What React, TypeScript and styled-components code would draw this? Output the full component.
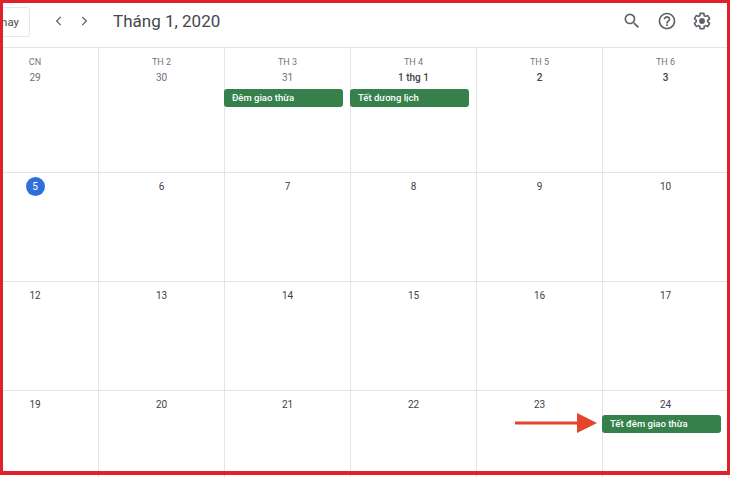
import React from 'react'
import styled, { createGlobalStyle } from 'styled-components'

const GlobalStyle = createGlobalStyle`
    html, body {
        margin: 0;
        padding: 0;
        background: #fff;
    }
    * {
        box-sizing: border-box;
    }
`

type Day = {
    label: string
    weekday?: string
    muted?: boolean
    strong?: boolean
    today?: boolean
    event?: string
}

const weeks: Day[][] = [
    [
        { weekday: 'CN', label: '29', muted: true },
        { weekday: 'TH 2', label: '30', muted: true },
        { weekday: 'TH 3', label: '31', muted: true, event: 'Đêm giao thừa' },
        { weekday: 'TH 4', label: '1 thg 1', strong: true, event: 'Tết dương lịch' },
        { weekday: 'TH 5', label: '2', strong: true },
        { weekday: 'TH 6', label: '3', strong: true },
    ],
    [
        { label: '5', today: true },
        { label: '6' },
        { label: '7' },
        { label: '8' },
        { label: '9' },
        { label: '10' },
    ],
    [
        { label: '12' },
        { label: '13' },
        { label: '14' },
        { label: '15' },
        { label: '16' },
        { label: '17' },
    ],
    [
        { label: '19' },
        { label: '20' },
        { label: '21' },
        { label: '22' },
        { label: '23' },
        { label: '24', event: 'Tết đêm giao thừa' },
    ],
]

export default function App() {
    return (
        <Page>
            <GlobalStyle />
            <Toolbar>
                <TodayButton>nay</TodayButton>
                <NavGroup>
                    <NavIcon viewBox="0 0 24 24">
                        <path d="M15 5l-7 7 7 7" />
                    </NavIcon>
                    <NavIcon viewBox="0 0 24 24">
                        <path d="M9 5l7 7-7 7" />
                    </NavIcon>
                </NavGroup>
                <Title>Tháng 1, 2020</Title>
                <Actions>
                    <ActionIcon viewBox="0 0 24 24">
                        <path
                            fill="#5f6368"
                            d="M15.5 14h-.79l-.28-.27A6.47 6.47 0 0 0 16 9.5 6.5 6.5 0 1 0 9.5 16c1.61 0 3.09-.59 4.23-1.57l.27.28v.79l5 4.99L20.49 19l-4.99-5zm-6 0C7.01 14 5 11.99 5 9.5S7.01 5 9.5 5 14 7.01 14 9.5 11.99 14 9.5 14z"
                        />
                    </ActionIcon>
                    <ActionIcon viewBox="0 0 24 24">
                        <path
                            fill="#5f6368"
                            d="M11 18h2v-2h-2v2zm1-16C6.48 2 2 6.48 2 12s4.48 10 10 10 10-4.48 10-10S17.52 2 12 2zm0 18c-4.41 0-8-3.59-8-8s3.59-8 8-8 8 3.59 8 8-3.59 8-8 8zm0-14c-2.21 0-4 1.79-4 4h2c0-1.1.9-2 2-2s2 .9 2 2c0 2-3 1.75-3 5h2c0-2.25 3-2.5 3-5 0-2.21-1.79-4-4-4z"
                        />
                    </ActionIcon>
                    <ActionIcon viewBox="0 0 24 24">
                        <path
                            fill="#5f6368"
                            d="M13.85 22.25h-3.7c-.74 0-1.36-.54-1.45-1.27l-.27-1.89c-.27-.14-.53-.29-.79-.46l-1.8.72c-.7.26-1.47-.03-1.81-.65L2.2 15.53c-.35-.66-.2-1.44.36-1.88l1.53-1.19c-.01-.15-.02-.3-.02-.46 0-.15.01-.31.02-.46l-1.52-1.19c-.59-.45-.74-1.26-.37-1.88l1.85-3.19c.34-.62 1.11-.9 1.79-.63l1.81.73c.26-.17.52-.32.78-.46l.27-1.91c.09-.7.71-1.25 1.44-1.25h3.7c.74 0 1.36.54 1.45 1.27l.27 1.89c.27.14.53.29.79.46l1.8-.72c.71-.26 1.48.03 1.82.65l1.84 3.18c.36.66.2 1.44-.36 1.88l-1.52 1.19c.01.15.02.3.02.46s-.01.31-.02.46l1.52 1.19c.56.45.72 1.23.37 1.86l-1.86 3.22c-.34.62-1.11.9-1.8.63l-1.8-.72c-.26.17-.52.32-.78.46l-.27 1.91c-.1.68-.72 1.22-1.46 1.22zm-3.23-2h2.76l.37-2.55.53-.22c.44-.18.88-.44 1.34-.78l.45-.34 2.38.96 1.38-2.4-2.03-1.58.07-.56c.03-.26.06-.51.06-.78s-.03-.53-.06-.78l-.07-.56 2.03-1.58-1.39-2.4-2.39.96-.45-.35c-.42-.32-.87-.58-1.33-.77l-.52-.22-.37-2.55h-2.76l-.37 2.55-.53.21c-.44.19-.88.44-1.34.79l-.45.33-2.38-.95-1.39 2.39 2.03 1.58-.07.56a7 7 0 0 0-.06.79c0 .26.02.53.06.78l.07.56-2.03 1.58 1.38 2.4 2.39-.96.45.35c.43.33.86.58 1.33.77l.53.22.38 2.55zM12 15.5a3.5 3.5 0 1 1 0-7 3.5 3.5 0 0 1 0 7z"
                        />
                    </ActionIcon>
                </Actions>
            </Toolbar>
            <Calendar>
                {weeks.map((week, w) => (
                    <Week key={w} $first={w === 0}>
                        {week.map((day, d) => (
                            <Cell key={d} $first={w === 0}>
                                {day.weekday && <Weekday>{day.weekday}</Weekday>}
                                {day.today ? (
                                    <TodayBadge>{day.label}</TodayBadge>
                                ) : (
                                    <DayLabel $muted={day.muted} $strong={day.strong}>
                                        {day.label}
                                    </DayLabel>
                                )}
                                {day.event && <EventChip $first={w === 0}>{day.event}</EventChip>}
                            </Cell>
                        ))}
                    </Week>
                ))}
            </Calendar>
            <Arrow viewBox="0 0 82 24">
                <rect x="0" y="10.5" width="64" height="3" fill="#e5432a" />
                <polygon points="62,2 82,12 62,22" fill="#e5432a" />
            </Arrow>
            <Frame />
        </Page>
    )
}

const Page = styled.div`
    position: relative;
    width: 730px;
    height: 478px;
    overflow: hidden;
    background: #fff;
    font-family: Roboto, 'Liberation Sans', sans-serif;
`
const Frame = styled.div`
    position: absolute;
    top: 0;
    left: 0;
    width: 730px;
    height: 475px;
    border-style: solid;
    border-color: #e0202c;
    border-width: 3px 3px 4px 3px;
    pointer-events: none;
`
const Toolbar = styled.div`
    display: flex;
    align-items: center;
    height: 48px;
    padding: 0 18px 6px 0;
    border-bottom: 1px solid #e4e5e8;
`
const TodayButton = styled.div`
    display: flex;
    align-items: center;
    justify-content: flex-end;
    width: 30px;
    height: 30px;
    margin-top: 2px;
    padding-right: 10px;
    border: 1px solid #e6e7ea;
    border-left: none;
    border-radius: 0 3px 3px 0;
    font-size: 11.5px;
    color: #4a4d52;
`
const NavGroup = styled.div`
    display: flex;
    align-items: center;
    gap: 11px;
    margin-left: 22px;
`
const NavIcon = styled.svg`
    width: 14px;
    height: 14px;
    fill: none;
    stroke: #5f6368;
    stroke-width: 2.2;
`
const Title = styled.div`
    margin-left: 22px;
    font-size: 17px;
    color: #44474b;
`
const Actions = styled.div`
    display: flex;
    align-items: center;
    gap: 15px;
    margin-left: auto;
`
const ActionIcon = styled.svg`
    width: 20px;
    height: 20px;
`
const Calendar = styled.div`
    display: flex;
    flex-direction: column;
`
const Week = styled.div<{ $first: boolean }>`
    display: grid;
    grid-template-columns: 99px repeat(5, 126px);
    height: ${(props) => (props.$first ? '125px' : '109px')};
    border-bottom: 1px solid #e4e5e8;
`
const Cell = styled.div<{ $first: boolean }>`
    display: flex;
    flex-direction: column;
    align-items: center;
    padding-top: ${(props) => (props.$first ? '8px' : '5px')};
    border-right: 1px solid #e4e5e8;
    &:first-child {
        padding-right: 28px;
    }
`
const Weekday = styled.div`
    font-size: 9px;
    line-height: 12px;
    margin-bottom: 1px;
    color: #73767b;
`
const DayLabel = styled.div<{ $muted?: boolean; $strong?: boolean }>`
    font-size: 10px;
    line-height: 13px;
    padding-top: 2px;
    font-weight: ${(props) => (props.$strong ? 500 : 400)};
    color: ${(props) => (props.$muted ? '#6f7276' : '#3f4246')};
`
const TodayBadge = styled.div`
    display: flex;
    align-items: center;
    justify-content: center;
    width: 19px;
    height: 19px;
    margin-top: -1px;
    border-radius: 50%;
    background: #2f6fdc;
    color: #fff;
    font-size: 10px;
`
const EventChip = styled.div<{ $first: boolean }>`
    align-self: flex-start;
    width: 119px;
    height: 18px;
    margin-top: ${(props) => (props.$first ? '5px' : '4px')};
    margin-left: -1px;
    padding-left: 8px;
    border-radius: 3px;
    background: #36804c;
    color: #fff;
    font-size: 9.5px;
    font-weight: 500;
    line-height: 18px;
`
const Arrow = styled.svg`
    position: absolute;
    left: 515px;
    top: 411px;
    width: 82px;
    height: 24px;
`
